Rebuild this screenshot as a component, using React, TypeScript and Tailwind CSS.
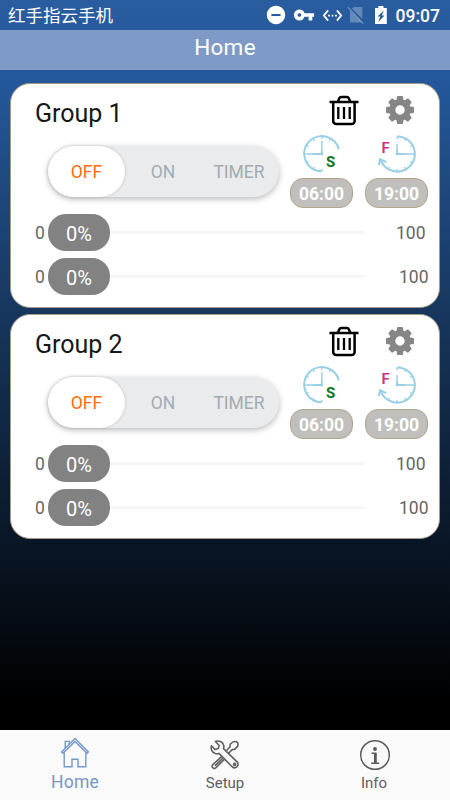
import { MdRemoveCircle, MdSettingsEthernet, MdVpnKey } from 'react-icons/md';

interface Group {
  name: string;
  start: string;
  finish: string;
  levels: number[];
}

const GROUPS: Group[] = [
  { name: 'Group 1', start: '06:00', finish: '19:00', levels: [0, 0] },
  { name: 'Group 2', start: '06:00', finish: '19:00', levels: [0, 0] },
];

const TICKS = [0, 30, 60, 90, 120, 150, 180, 210, 240, 270, 300, 330];

function NoSignalIcon() {
  return (
    <svg className="mr-[9px]" width="18" height="20" viewBox="0 0 18 20">
      <path d="M3 5.5V17.5h12zM5 3.4l2-1.4h8.3V14z" fill="#fff" opacity="0.28" />
      <path d="M0.8 2.2L16.2 18.6" stroke="#fff" strokeWidth="1.2" opacity="0.35" />
    </svg>
  );
}

function BatteryIcon() {
  return (
    <svg width="14" height="20" viewBox="0 0 14 20">
      <path d="M4.3 1h5.2v2h3.3v16H1V3h3.3z" fill="#fff" />
      <path d="M9.9 5.5L3.6 11.6h2.7L4.3 17l6.2-6.6H7.8z" fill="#285b9c" />
    </svg>
  );
}

function TrashIcon() {
  return (
    <svg className="mt-[2px]" width="30" height="32" viewBox="0 0 30 32" fill="none" stroke="#000" strokeWidth="2.5">
      <path d="M0.5 7H29.5M4.2 7V26a3 3 0 0 0 3 3H22.6a3 3 0 0 0 3-3V7" />
      <path d="M8.8 7L10.2 3.6a2.4 2.4 0 0 1 2.2-1.5h5.4a2.4 2.4 0 0 1 2.2 1.5L21.4 7" />
      <path d="M9.3 12v12M15 12v12M20.7 12v12" strokeWidth="2.3" />
    </svg>
  );
}

function GearIcon() {
  return (
    <svg className="ml-[26px]" width="30" height="30" viewBox="-15 -15 30 30" fill="#868686">
      {[0, 45, 90, 135, 180, 225, 270, 315].map((a) => (
        <path key={a} d="M-3.7 -9L-2.9 -13.4Q-2.8 -14 -2.2 -14H2.2Q2.8 -14 2.9 -13.4L3.7 -9z" transform={`rotate(${a})`} />
      ))}
      <circle r="7.7" fill="none" stroke="#868686" strokeWidth="6" />
    </svg>
  );
}

function StartClock() {
  return (
    <svg width="40" height="40" viewBox="0 0 40 40" fill="none" stroke="#98cfe6" strokeWidth="2">
      <path d="M19.8 37.3A17.6 17.6 0 1 1 36.8 15.2" />
      <path d="M19.8 7v13H5" strokeWidth="1.4" />
      <path d="M19.8 17v3.2H11" strokeWidth="1.7" />
      <circle cx="19.8" cy="20" r="1.4" fill="#98cfe6" stroke="none" />
      {TICKS.filter((a) => a >= 180 || a < 60).map((a) => (
        <path key={a} d="M19.8 3v2" strokeWidth="1.3" transform={`rotate(${a} 19.8 20)`} />
      ))}
      <text x="24" y="33.3" fill="#08791c" stroke="none" className="font-['Roboto',sans-serif] text-[15px] font-bold">S</text>
    </svg>
  );
}

function FinishClock() {
  return (
    <svg width="40" height="40" viewBox="0 0 40 40" fill="none" stroke="#98cfe6" strokeWidth="2">
      <path d="M20 2.4A17.6 17.6 0 1 1 3.6 25.6" />
      <path d="M1.9 31L3 25.2l6.4 2.9" />
      <path d="M20 10v10H35" strokeWidth="1.4" />
      <path d="M20 16.5v3.7H28" strokeWidth="1.7" />
      <circle cx="20" cy="20" r="1.4" fill="#98cfe6" stroke="none" />
      {TICKS.filter((a) => a < 220).map((a) => (
        <path key={a} d="M20 3v2" strokeWidth="1.3" transform={`rotate(${a} 20 20)`} />
      ))}
      <text x="4.4" y="18.7" fill="#cc2f85" stroke="none" className="font-['Roboto',sans-serif] text-[15px] font-semibold">F</text>
    </svg>
  );
}

function HomeIcon() {
  return (
    <svg width="30" height="32" viewBox="0 0 30 32" fill="none" stroke="#7697c9" strokeWidth="1.4">
      <path d="M1.6 15L15 1.6l13.4 13.4-1.4 1.3L15 4.6 3 16.3z" />
      <path d="M4.2 15.6V29.8h7.8v-7.6h6v7.6h7.8V15.6" />
      <path d="M5.2 11V4.4h4v2.6" />
    </svg>
  );
}

function ToolsIcon() {
  return (
    <svg width="30" height="30" viewBox="0 0 30 30" fill="none" stroke="#606060" strokeWidth="1.6" strokeLinejoin="round" strokeLinecap="round">
      {/* Screwdriver */}
      <path d="M17 10l3-3.2.2-2.6c1.8-2 4.2-3.3 6.2-2.4 2.2 1 2 3.6.6 5.2-1 1.2-1.8 2.2-2.8 2.4l-2 .2-3.4 3.4" />
      <path d="M11.8 16.4l-9 8.3a2.1 2.1 0 0 0 3.1 3.1l8.6-8.6M5.4 25.3l6.8-6.4" />
      {/* Wrench */}
      <path d="M5.4 1.5l3.8 4-1 3.1-3.1 1-3.6-3.8c-1 3.4.5 6.8 3.9 7.8 1.3.3 2.4.2 3.5-.2L22.4 27a3.5 3.5 0 0 0 4.9-4.9L13.5 8.6c.4-1.1.5-2.3.1-3.5-1-3.4-4.6-4.8-8.2-3.6z" />
      <circle cx="24.6" cy="24.4" r="1" />
    </svg>
  );
}

function InfoIcon() {
  return (
    <svg width="32" height="32" viewBox="0 0 32 32" fill="none" stroke="#5b5b5b">
      <circle cx="16" cy="16" r="14.3" strokeWidth="1.5" />
      <circle cx="16" cy="10" r="1.9" fill="#5b5b5b" stroke="none" />
      <path d="M12.5 14.2h4.2v9.5M12.2 24.2h8" strokeWidth="1.4" />
      <path d="M16.3 14v10" strokeWidth="2.7" />
    </svg>
  );
}

function StatusBar() {
  return (
    <div className="flex h-[30px] items-center justify-between pl-2 pr-[10px] text-white">
      <span className="font-['Noto_Sans_CJK_SC',sans-serif] text-[17.5px] leading-[30px]">红手指云手机</span>
      <div className="flex items-center">
        <MdRemoveCircle className="mr-[6px] h-[22px] w-[22px]" />
        <MdVpnKey className="mr-[7px] h-[22px] w-[22px]" />
        <MdSettingsEthernet className="mr-[4px] h-[21px] w-[21px]" />
        <NoSignalIcon />
        <BatteryIcon />
        <span className="ml-[8px] pt-[2px] text-[17.5px] font-medium">09:07</span>
      </div>
    </div>
  );
}

function ModeToggle() {
  return (
    <div className="mt-3 flex h-[51px] w-[231px] rounded-full bg-[#e9ebed] text-[17.5px] text-[#a3abb1] shadow-[0_2px_6px_rgba(0,0,0,0.28)]">
      <div className="flex w-[77px] items-center justify-center rounded-full bg-white pt-[2px] text-[#ff6c0a] shadow-[0_0_3px_rgba(0,0,0,0.2)]">OFF</div>
      <div className="flex w-[76px] items-center justify-center pt-[2px]">ON</div>
      <div className="flex w-[76px] items-center justify-center pt-[2px]">TIMER</div>
    </div>
  );
}

function TimePill({ time }: { time: string }) {
  return (
    <div className="mt-1 flex h-[30px] w-[63px] items-center justify-center rounded-[13px] border border-[#b3a68f] bg-[#c0bfbb] pt-[2px] text-[17.5px] font-bold text-white">
      {time}
    </div>
  );
}

function LevelSlider({ value, last }: { value: number; last: boolean }) {
  return (
    <div className="flex h-[37px] items-center text-[17.5px] text-[#666]">
      <span className="w-[13px] pt-[2px]">{value}</span>
      <div className="flex h-[37px] w-[62px] items-center justify-center rounded-[18px] bg-[#828282] pt-[2px] text-[20px] text-white">{value}%</div>
      <div className="-mt-[1px] h-[3px] w-[255px] bg-[#f6f6f6]" />
      <span className={last ? 'ml-[34px] pt-[2px]' : 'ml-[31px] pt-[2px]'}>100</span>
    </div>
  );
}

function GroupCard({ group }: { group: Group }) {
  return (
    <section className="h-[225px] rounded-[20px] border border-[#a49a8a] bg-white pl-6">
      <div className="flex h-[49px] items-center pt-[3px]">
        <h2 className="w-[294px] pt-[7px] text-[25px] text-[#171717]">{group.name}</h2>
        <TrashIcon />
        <GearIcon />
      </div>
      <div className="flex pt-[1px] pl-[13px]">
        <ModeToggle />
        <div className="ml-[11px] flex gap-3">
          <div className="flex flex-col items-center">
            <StartClock />
            <TimePill time={group.start} />
          </div>
          <div className="flex flex-col items-center">
            <FinishClock />
            <TimePill time={group.finish} />
          </div>
        </div>
      </div>
      <div className="mt-[6px] flex flex-col gap-[7px]">
        {group.levels.map((value, i) => (
          <LevelSlider key={i} value={value} last={i === group.levels.length - 1} />
        ))}
      </div>
    </section>
  );
}

export default function App() {
  return (
    <div className="flex h-[800px] w-[450px] flex-col overflow-hidden bg-linear-[180deg,#295d9f_0px,#24589b_80px,#163459_330px,#000_700px] font-['Roboto',sans-serif]">
      <StatusBar />
      <header className="h-10 bg-[#7e9ac6] pt-[2px] text-center text-[22.5px] leading-[30px] tracking-[0.3px] text-white">Home</header>

      <main className="flex flex-1 flex-col gap-[6px] px-[10px] pt-[13px]">
        {GROUPS.map((group) => (
          <GroupCard key={group.name} group={group} />
        ))}
      </main>

      {/* Tab bar */}
      <nav className="grid h-[70px] grid-cols-3 bg-[#fafafa] text-[15px] text-[#5f5f5f]">
        <div className="flex flex-col items-center pt-[7px]">
          <HomeIcon />
          <span className="mt-[3px] text-[17.5px] leading-5 tracking-[0.2px] text-[#7697c9]">Home</span>
        </div>
        <div className="flex flex-col items-center pt-[10px]">
          <ToolsIcon />
          <span className="mt-[3px] leading-5">Setup</span>
        </div>
        <div className="flex flex-col items-center pt-[9px]">
          <InfoIcon />
          <span className="mt-[2px] mr-[2px] leading-5">Info</span>
        </div>
      </nav>
    </div>
  );
}
